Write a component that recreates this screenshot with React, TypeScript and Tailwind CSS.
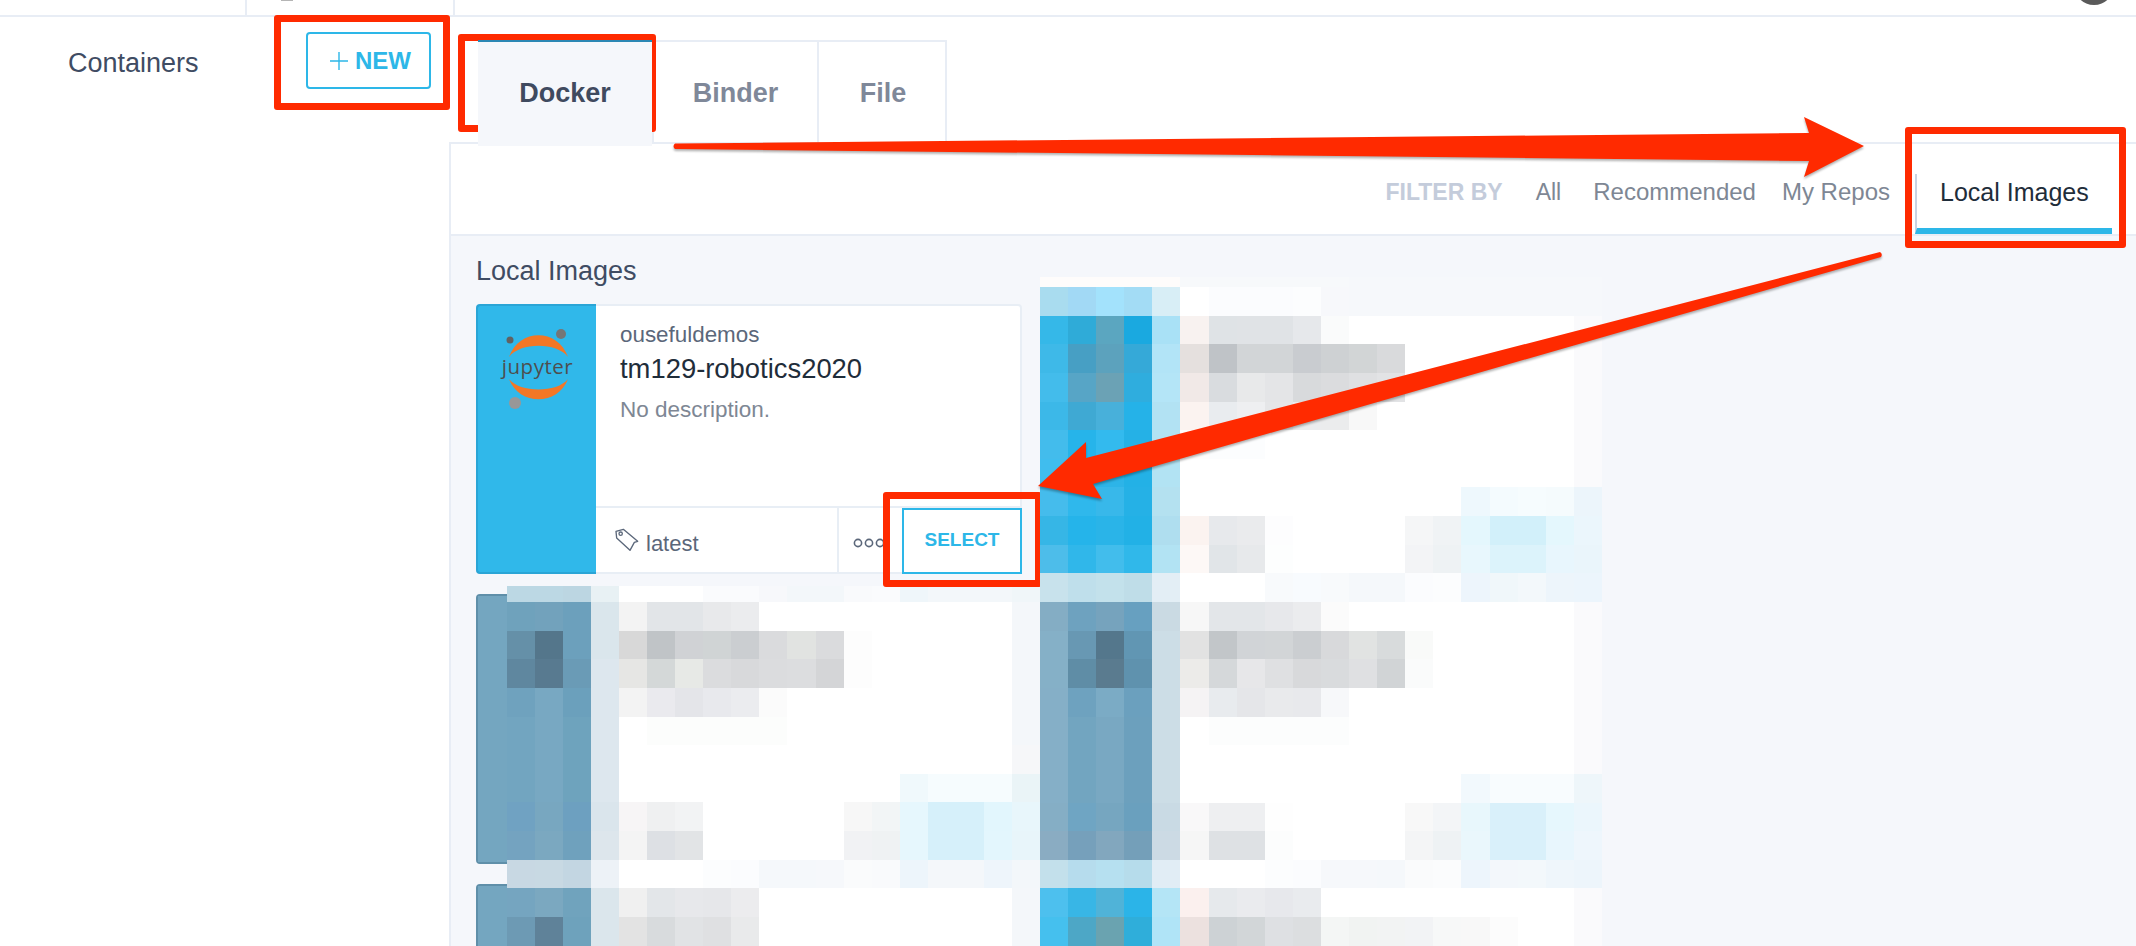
import React from "react";

const F = "ffffff";
// fills a mosaic row: `a` from the left, `b` against the right end, white between
const row = (n: number, a: string, b = "") => {
  const l = a.split(" ").filter(Boolean);
  const r = b.split(" ").filter(Boolean);
  return [...l, ...Array(Math.max(0, n - l.length - r.length)).fill(F), ...r];
};

const rightRows: string[][] = [
  row(20, "fefcfb fefcfb fefcfb fefcfb fefcfb f7f9fb f7f9fb f7f9fb f7f9fb f7f9fb f7f9fb f6f8fb f6f8fb f6f8fb f6f8fb f6f8fb f6f8fb f6f8fb f6f8fb f6f8fb"),
  row(20, "a9dcef a2d9f5 a3e2fc a3dcf5 d8eef6 ffffff fbfcfe fbfcfe fbfcfe fcfdfe f7f8fb f6f8fb f6f8fb f6f8fb f6f8fb f6f8fb f6f8fb f6f8fb f6f8fb f6f8fb"),
  row(20, "35b8e8 2fabd8 5ba6c0 1aa9e0 a9e1f6 f8f2f0 dfe3e6 e0e3e6 e0e3e6 e6e8eb fafbfb", "fafafc"),
  row(20, "3eb9e8 479fc4 5ca2bd 35a9d8 b2e4f7 e5e0de bfc3c7 d2d5d7 d2d5d7 c9ccd0 ced1d3 d2d5d6 d9dadc", "fafafc"),
  row(20, "43bceb 57a5c6 6ba2b5 2fadde b4e5f7 f1e9e7 d9dcdf e8e9ea e4e5e7 d8dadc dbdcde dfe0e2 e2e3e5", "fafafc"),
  row(20, "3cb8e8 3fa9d3 48b0da 25b2e8 b2e2f3 fbf3f0 e9ecef eeeff1 e5e6e8 ebecee ebeced f8f8f8", "fafafc"),
  row(20, "43bcec 26b4ea 33baee 25b1e6 b2e3f3 fffdfc fcfdfe fcfdfe", "fafafc"),
  row(20, "40bdee 2db6ea 2db4e8 23b1e6 b2e3f3", "fafafc"),
  row(20, "45bcec 2fb8ec 38b8ea 25b1e6 b4e1f0", "eef8fd f4fbfe f6fcfe f5fbfd ecf5fb"),
  row(20, "36b6e6 25b4ea 2ab4e8 22b1e6 afdeef fbf3f0 e7e9ec eaebed fdfdfe", "f5f6f7 f0f3f5 e4f7fd d2f0fa d2f0fa e4f7fd ebf6fc"),
  row(20, "4dbdea 30b7ea 42bdec 30b8ea b2e3f3 fdf8f6 e1e5e8 e7e9eb fdfefe", "f3f4f6 eef2f4 e8f7fd dcf3fb dcf3fb e8f6fd eaf5fb"),
  row(20, "c8e2ec bfdfeb c3e1eb bfdde8 e3eef5 ffffff ffffff ffffff f8fafc f8fbfe f8fafc f5f8fb f5f8fb fbfcfe fcfdfe edf5fc f0f7fa f3f8fb edf5fb ecf5fc"),
  row(20, "84adc4 6ea2bf 76a3bd 67a0c0 cadae3 f7f7f7 e3e6e9 e3e6e9 e7e8eb ebecee fbfbfb", "fafafc"),
  row(20, "85b0c7 6898b3 54778c 6196b3 ccdde6 e2e2e2 c2c6c9 d1d4d7 d2d5d7 cbced1 d8d9db e1e3e2 d8dbdc f9faf9", "fafafc"),
  row(20, "85b0c7 5f8da6 5a7b8f 5f92ae ccdde6 ecebe9 d5d8da e7e7e9 dfe0e2 d8d9db d9dbdd dfe0e2 d1d4d6 fafbfb", "fafafc"),
  row(20, "85afc7 6ea2bf 7babc5 6ba0be ccdde6 f5f3f4 e8ebee e5e6e9 e9eaec e8e9ec f7f8fa", "fafafc"),
  row(20, "85afc7 72a5c0 79a8c2 6ca0bd ccdde6 ffffff fcfdfd fcfdfd fcfdfd fcfdfd fcfdfd", "fafafc"),
  row(20, "85afc7 72a5c0 79a8c2 6ca0bd ccdde6", "fafafc"),
  row(20, "85afc7 72a5c0 79a8c2 6ca0bd ccdde6", "f2f9fd f8fcfe f8fcfe f8fcfe eef6fa"),
  row(20, "85aec5 6fa5c3 76a6c0 6aa0be c9dae4 f9f8f9 eeeff1 eeeff1 fefefe", "f8f8f8 f3f5f7 e8f7fc d9f0fa d9f0fa e6f7fd ebf6fc"),
  row(20, "8aacc2 76a0bb 82a7be 749fb9 ccdae4 f6f6f6 dee1e4 dee1e4 fcfdfd", "f4f5f6 eef2f4 eaf7fc d9f0fa d9f0fa e8f6fd eef6fc"),
  row(20, "c3e0eb b6dced b6e0f0 b6dceb e1edf5 ffffff ffffff ffffff fcfdfe fbfcfe f6f8fb f6f8fb f5f8fb fafbfc fbfcfd edf5fc f3f7fb f3f8fb eff6fb edf5fb"),
  row(20, "4dc0ee 38b6e6 50b3d8 2bb4e8 b4e5f6 fbf0ee e6e9ec eaebee e7e8ec e9ebee", "fafafc"),
  row(20, "45c0ee 4da7c6 6aa3b0 2faeda b0e4f7 ece1df cdd2d5 d2d6d8 dee0e3 dcdee0 f4f6f5 f1f3f2 f2f3f3 f2f3f5 f7f8f8 f8f8f8 fcfcfc", "fafafc"),
];

const leftRows: string[][] = [
  row(19, "bcd8e4 bcd8e4 bcd6e2 e8f1f4 ffffff ffffff ffffff fafbfd fafbfd f7f8fb f3f7fa f3f7fa f9fafc fafbfd eff6fa f3f7fa f3f7fa f3f7fa f0f6f9"),
  row(19, "6fa2bc 72a2bc 6ca0bc dae6ec f3f3f3 e2e5e8 e2e5e8 e8e9eb ebecee", "f4f7fa"),
  row(19, "6590a8 54768b 6ca0bc dae6ec d8d8d8 c0c4c7 d0d2d5 d0d4d5 cbced1 dadbdd e1e3e1 dadbdd fdfdfd", "f4f7fa"),
  row(19, "5f879f 587a90 6a9bb6 dde7ee e6e6e4 d4d8d8 e7e9e6 dbdcde d8d9db dbdcde dcdddf d4d5d7 fdfdfd", "f4f7fa"),
  row(19, "6fa2be 78a8c2 6ba0bc dde7ee f3f3f3 eaeaee e4e5e9 e8e9ed ebecef fbfbfb", "f4f7fa"),
  row(19, "72a5c0 78a8c2 6ea3bd dde7ee ffffff fcfdfc fcfdfc fcfdfc fcfdfc fcfdfc", "f4f7fa"),
  row(19, "72a5c0 78a8c2 6ea3bd dde7ee", "f6f7f9"),
  row(19, "72a5c0 78a8c2 6ea3bd dde7ee", "f0f9fc f6fcfe f6fcfe f6fcfe eaf4f7"),
  row(19, "70a2c2 78a7c0 6da0c0 dae5ec f7f5f6 eff0f1 f2f3f4", "f7f7f7 f2f5f6 e6f7fd d6f0fa d6f0fa e2f6fd e8f6fb"),
  row(19, "74a3c0 7ba8c0 6fa1bd dde6ec f4f4f4 dde0e4 e2e4e6", "f1f2f4 eff2f3 e6f7fd d6f0fa d6f0fa e3f6fd e8f5fa"),
  row(19, "c8d8e3 c8d9e3 c3d6e2 edf2f7 ffffff ffffff ffffff fcfdfe fbfcfe f5f8fb f5f8fb f6f8fb fafbfc f9fafc edf5fb f4f7fa f4f7fa eef5fb f3f7fa"),
  row(19, "75a5c0 7ba8c0 70a3bd dbe6ec f0f0f0 e3e6e9 e7e8eb e6e7ea ececee", "f4f7fa"),
  row(19, "6d9ab4 5f8299 6ea2bc dbe6ec e3e3e3 d8dbdd e1e3e5 dfe0e2 e9eaeb", "f4f7fa"),
];

function Cells({ rows }: { rows: string[][] }) {
  return (
    <>
      {rows.flatMap((r, i) =>
        r.map((c, j) => <div key={`${i}-${j}`} style={{ backgroundColor: `#${c}` }} />)
      )}
    </>
  );
}

function JupyterLogo() {
  return (
    <svg width="80" height="92" viewBox="0 0 80 92" className="block">
      <circle cx="64" cy="14" r="5" fill="#767677" />
      <circle cx="13" cy="20" r="3.5" fill="#616262" />
      <circle cx="18" cy="83" r="6" fill="#989798" />
      <path d="M12 37 C22 8 61 8 71 37 C60 22 23 22 12 37 Z" fill="#f37726" />
      <path d="M12 59 C22 86 61 86 71 59 C60 73 23 73 12 59 Z" fill="#f37726" />
      <text x="40.5" y="54" textAnchor="middle" fontSize="20.5" fill="#4e4e4e" fontFamily="'Open Sans', sans-serif" letterSpacing="0.5">
        jupyter
      </text>
    </svg>
  );
}

function TagIcon() {
  return (
    <svg width="24" height="24" viewBox="45 60 72 72" fill="none" stroke="#5b677a" strokeWidth="4" strokeLinejoin="round" className="shrink-0">
      <path d="M48 70 L70 64 L113 100 L103 103 L90 127 L50 90 Z" />
      <circle cx="62" cy="77" r="5" />
    </svg>
  );
}

function ActiveCard() {
  return (
    <div className="flex h-[270px] rounded border-2 border-[#e8eef5] bg-white">
      <div className="w-[120px] -my-[2px] -ml-[2px] shrink-0 rounded-l border-2 border-r-0 border-[#2aa5d6] bg-[#30b8ea] pt-[14px] pl-[19px]">
        <JupyterLogo />
      </div>
      <div className="flex min-w-0 flex-1 flex-col">
        <div className="flex-1 pl-[24px] pt-[15px]">
          <div className="text-[22.4px] leading-[28px] text-[#5b677a]">ousefuldemos</div>
          <div className="mt-[2px] text-[27.4px] leading-[36px] text-[#1f2d3a]">tm129-robotics2020</div>
          <div className="mt-[8px] text-[22.5px] leading-[30px] text-[#7e8794]">No description.</div>
        </div>
        <div className="flex h-[66px] border-t-2 border-[#e8eef5]">
          <div className="flex w-[243px] items-center border-r-2 border-[#e8eef5] pl-[19px]">
            <TagIcon />
            <span className="ml-[7px] mt-[7px] text-[22px] text-[#5b677a]">latest</span>
          </div>
          <div className="flex flex-1 items-center pl-[14px] pt-[6px]">
            <svg width="32" height="12" viewBox="0 0 32 12" fill="none" stroke="#5b677a" strokeWidth="1.6" className="shrink-0">
              <circle cx="5" cy="6" r="3.6" />
              <circle cx="16" cy="6" r="3.6" />
              <circle cx="27" cy="6" r="3.6" />
            </svg>
          </div>
          <button className="flex h-[66px] w-[120px] items-center justify-center border-2 border-[#2db7e8] bg-white pb-[2px] text-[19px] font-bold text-[#2db7e8] -mr-[2px]">
            SELECT
          </button>
        </div>
      </div>
    </div>
  );
}

function HiddenCard() {
  return (
    <div className="flex h-[270px] rounded border-2 border-[#5f8fa9] bg-white">
      <div className="w-[120px] shrink-0 bg-[#74a6c0]" />
      <div className="flex-1" />
    </div>
  );
}

function RedBox({ className }: { className: string }) {
  return <div className={`absolute rounded-[3px] border-[7px] border-[#ff2a00] ${className}`} />;
}

export default function App() {
  return (
    <div className="relative h-[946px] w-[2136px] overflow-hidden bg-white font-['Liberation_Sans',Arial,sans-serif]">
      {/* top bar */}
      <header className="flex h-[17px] items-start justify-between overflow-hidden border-b-2 border-[#e8edf5] pl-[245px] pr-[22px]">
        <div className="h-full w-[210px] border-x-2 border-[#e8edf5] pl-[34px]">
          <div className="h-[1px] w-[12px] bg-[#b5b5b5]" />
        </div>
        <div className="-mt-[35px] h-[40px] w-[40px] rounded-full bg-[#5a5a5a]" />
      </header>

      <div className="flex">
        {/* side column */}
        <aside className="w-[449px] shrink-0">
          <div className="mt-[15px] flex h-[57px] items-center pl-[68px]">
            <div className="w-[238px] pt-[5px] text-[27px] text-[#3f4c63]">Containers</div>
            <button className="flex h-[57px] w-[125px] items-center rounded border-2 border-[#2db7e8] pl-[21px] text-[24px] font-bold text-[#2db7e8]">
              <svg width="20" height="20" viewBox="0 0 20 20" stroke="#2db7e8" strokeWidth="1.4" className="mr-[6px] shrink-0">
                <path d="M10 1V19M1 10H19" />
              </svg>
              NEW
            </button>
          </div>
        </aside>

        {/* main column */}
        <main className="min-w-0 flex-1">
          <div className="mt-[23px] flex h-[102px] items-start">
            <div className="h-full w-[29px]" />
            <div className="relative z-10 flex h-[106px] w-[174px] items-center justify-center border-t-2 border-[#2b87b4] bg-[#f5f7fb] pb-[2px] text-[27px] font-bold text-[#3f4a5f]">
              Docker
            </div>
            <div className="flex h-[102px] w-[167px] items-center justify-center border-x-2 border-t-2 border-[#e8edf5] pt-[3px] text-[27px] font-bold text-[#7f8899]">
              Binder
            </div>
            <div className="flex h-[102px] w-[128px] items-center justify-center border-r-2 border-t-2 border-[#e8edf5] pl-[2px] pt-[3px] text-[27px] font-bold text-[#7f8899]">
              File
            </div>
          </div>

          <section className="border-l-2 border-t-2 border-[#e8edf5]">
            {/* filter bar */}
            <div className="flex h-[92px] items-start justify-end border-b-2 border-[#e8edf5] pr-[24px] pt-[34px] leading-[28px]">
              <span className="text-[23px] font-bold text-[#c4ccdb]">FILTER BY</span>
              <span className="ml-[33px] text-[23px] text-[#7e8794]">All</span>
              <span className="ml-[32px] text-[24px] text-[#7e8794]">Recommended</span>
              <span className="ml-[26px] text-[24px] text-[#7e8794]">My Repos</span>
              <div className="ml-[25px] h-[60px] w-[197px] self-end border-b-[6px] border-l-2 border-b-[#2db7e8] border-l-[#c9d3e2] pl-[23px] pt-[4px] text-[25px] text-[#1f2d3a]">
                Local Images
              </div>
            </div>

            {/* results */}
            <div className="h-[720px] bg-[#f5f7fb] pl-[25px] pt-[20px]">
              <h2 className="h-[30px] text-[27px] font-normal leading-[30px] text-[#3f4c63]">Local Images</h2>
              <div className="mt-[18px] flex items-start">
                <div className="relative flex w-[546px] shrink-0 flex-col gap-[20px]">
                  <ActiveCard />
                  <HiddenCard />
                  <HiddenCard />
                  {/* pixelated cards lying over the list */}
                  <div className="absolute left-[31px] top-[282px] grid grid-cols-[repeat(19,28.05px)] grid-rows-[16px_repeat(12,28.65px)]">
                    <Cells rows={leftRows} />
                  </div>
                </div>
                <div className="relative z-10 ml-[18px] -mt-[27px] grid grid-cols-[repeat(20,28.1px)] grid-rows-[10px_repeat(23,28.65px)]">
                  <Cells rows={rightRows} />
                </div>
              </div>
            </div>
          </section>
        </main>
      </div>

      {/* red annotations drawn over the page */}
      <RedBox className="left-[274px] top-[15px] h-[95px] w-[176px]" />
      <RedBox className="left-[458px] top-[34px] h-[98px] w-[198px]" />
      <RedBox className="left-[1905px] top-[127px] h-[121px] w-[221px]" />
      <RedBox className="left-[883px] top-[492px] h-[95px] w-[159px]" />
      <svg width="2136" height="946" viewBox="0 0 2136 946" className="pointer-events-none absolute left-0 top-0 z-20 drop-shadow-[0_2px_1px_rgba(0,0,0,0.3)]">
        <path d="M675 143.5 L1809 133 L1804 117 L1864 146 L1804 177 L1809 161 L675 149 Q672 146 675 143.5 Z" fill="#ff2a00" />
        <path d="M1880 252 Q1883 254 1881 257 L1093 484 L1102 499 L1038 486 L1086 442 L1086 458 Z" fill="#ff2a00" />
      </svg>
    </div>
  );
}
